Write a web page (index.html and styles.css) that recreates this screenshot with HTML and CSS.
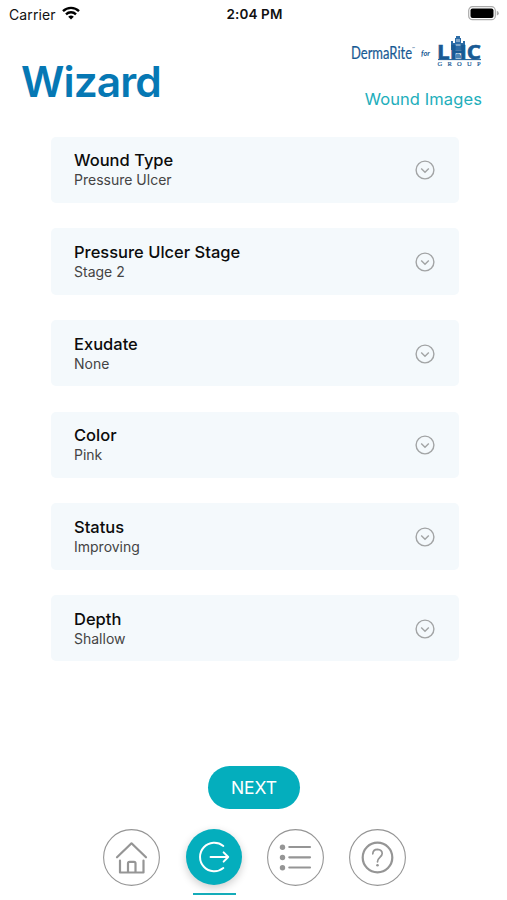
FILE: index.html
```html
<!DOCTYPE html>
<html lang="en">
<head>
<meta charset="utf-8">
<title>Wizard</title>
<link rel="stylesheet" href="styles.css">
</head>
<body>
<svg class="defs" width="0" height="0" aria-hidden="true">
  <symbol id="chevron" viewBox="0 0 20 20"><circle cx="10" cy="10" r="8.9"/><path d="M6.2 8.4 10 12.2 13.8 8.4"/></symbol>
</svg>
<div class="status-bar">
  <div class="carrier"><span>Carrier</span>
    <svg width="18" height="14" viewBox="0 0 18 14" fill="none" stroke="#000" stroke-width="2.4"><path d="M1 5.1a11.5 11.5 0 0 1 16 0"/><path d="M4 8.3a7.2 7.2 0 0 1 10 0"/><path d="M9 13.5 6.2 10.8a4 4 0 0 1 5.6 0z" fill="#000" stroke="none"/></svg>
  </div>
  <div class="time">2:04 PM</div>
  <svg class="battery" width="32" height="15" viewBox="0 0 32 15"><rect x=".7" y=".7" width="26.6" height="13" rx="3.8" fill="#fff" stroke="#aaa" stroke-width="1.2"/><rect x="2.5" y="2.4" width="23" height="9.6" rx="2" fill="#000"/><path d="M28.8 4.8q2 .8 2 2.4t-2 2.4z" fill="#aaa"/></svg>
</div>
<header class="header">
  <h1>Wizard</h1>
  <div class="brand">
    <svg class="logo" width="134" height="34" viewBox="0 0 134 34" fill="#185a94">
      <text class="derma" x="1" y="23" textLength="61" lengthAdjust="spacingAndGlyphs">DermaRite</text>
      <text class="tm" x="62" y="14">™</text>
      <text class="for" x="71" y="20" textLength="9" lengthAdjust="spacingAndGlyphs">for</text>
      <path d="M101 14V5h2v2h2V2h1V0h4v2h1v5h2V5h2v9z" fill="#2c6ca6"/>
      <path d="M105.500 9h5M107 3v3M109 3v3" stroke="#fff" stroke-width=".8"/>
      <text class="lhc" x="87" y="22.500" textLength="44" lengthAdjust="spacingAndGlyphs">LHC</text>
      <path d="M88 23.600h43" stroke="#185a94" stroke-width="1"/>
      <path d="M105 22.500v-3q3-4 6 0v3z" fill="#4b86b7"/>
      <text class="group" x="87.500" y="30" textLength="43">GROUP</text>
    </svg>
    <a class="images-link">Wound Images</a>
  </div>
</header>
<main class="cards">
  <section class="card"><div><h2>Wound Type</h2><p>Pressure Ulcer</p></div><svg class="chevron"><use href="#chevron"/></svg></section>
  <section class="card"><div><h2>Pressure Ulcer Stage</h2><p>Stage 2</p></div><svg class="chevron"><use href="#chevron"/></svg></section>
  <section class="card"><div><h2>Exudate</h2><p>None</p></div><svg class="chevron"><use href="#chevron"/></svg></section>
  <section class="card"><div><h2>Color</h2><p>Pink</p></div><svg class="chevron"><use href="#chevron"/></svg></section>
  <section class="card"><div><h2>Status</h2><p>Improving</p></div><svg class="chevron"><use href="#chevron"/></svg></section>
  <section class="card"><div><h2>Depth</h2><p>Shallow</p></div><svg class="chevron"><use href="#chevron"/></svg></section>
</main>
<button class="next">NEXT</button>
<nav class="tabs">
  <a class="tab"><svg viewBox="0 0 57 57"><circle cx="28.500" cy="28.500" r="27.900" stroke-width="1.100"/><path d="M14 28.300 28.500 14.300 43 28.300M17 31.500V43.500H40.500V31.500M25 43.500V34.300Q25 32.800 26.500 32.800H31Q32.500 32.800 32.500 34.300V43.500"/></svg></a>
  <a class="tab active"><svg viewBox="0 0 57 57"><path d="M38 17.300A14.500 14.500 0 1 0 38 39.700M25 28.500H43M38.300 23.800 43 28.500 38.300 33.200"/></svg></a>
  <a class="tab"><svg viewBox="0 0 57 57"><circle cx="28.500" cy="28.500" r="27.900" stroke-width="1.100"/><path d="M22.300 18H43M22.300 28.300H43M22.300 38.500H43"/><g fill="#959595" stroke="none"><circle cx="15.500" cy="18.300" r="2.700"/><circle cx="15.500" cy="28.500" r="2.700"/><circle cx="15.500" cy="38.700" r="2.700"/></g></svg></a>
  <a class="tab"><svg viewBox="0 0 57 57"><circle cx="28.500" cy="28.500" r="27.900" stroke-width="1.100"/><circle cx="28.500" cy="28.500" r="14.800"/><path d="M23.800 24.800Q24 20.300 28.500 20.300 33.200 20.500 33.200 24.500C33.200 28 28.500 28.300 28.500 32.800" stroke-width="1.700"/><circle cx="28.500" cy="36.300" r="1.300" fill="#959595" stroke="none"/></svg></a>
</nav>
</body>
</html>
```
FILE: styles.css
```css
* { box-sizing: border-box; }
body { margin: 0; width: 507px; height: 900px; overflow: hidden; background: #fff; font-family: Inter, "Liberation Sans", sans-serif; color: #111; display: flex; flex-direction: column; }
h1, h2, p { margin: 0; }
.defs { position: absolute; }
.status-bar { height: 28px; padding: 0 7px 0 9px; display: grid; grid-template-columns: 1fr auto 1fr; align-items: center; font-size: 14px; }
.carrier { display: flex; align-items: center; gap: 6px; letter-spacing: .1px; }
.carrier svg { margin-top: -2px; }
.time { font-weight: 600; font-size: 13.500px; letter-spacing: .1px; }
.battery { justify-self: end; margin-top: -1px; }
.header { height: 108.500px; padding: 8px 25px 0 21px; display: flex; justify-content: space-between; align-items: flex-start; }
h1 { margin-top: 20px; font-size: 42.500px; line-height: 51px; font-weight: 600; letter-spacing: -.9px; color: #0678b4; }
.brand { display: flex; flex-direction: column; align-items: flex-end; }
.logo { display: block; margin-right: -2px; }
.derma { font: 17px Lato, sans-serif; stroke: #185a94; stroke-width: .2; }
.tm { font: 4px Lato, sans-serif; }
.for { font: italic bold 8px Lato, sans-serif; }
.lhc { font: bold 19px "Open Sans", sans-serif; stroke: #185a94; stroke-width: .6; }
.group { font: 6.500px "Liberation Serif", serif; stroke: #185a94; stroke-width: .2; }
.images-link { margin-top: 19px; font-size: 16.500px; line-height: 21px; letter-spacing: .1px; color: #22aebb; }
.cards { width: 408.500px; margin-left: 50.500px; display: flex; flex-direction: column; gap: 25.200px; }
.card { height: 66.500px; padding: 1px 24px 0 23.500px; border-radius: 5px; background: #f4f9fc; display: flex; align-items: center; justify-content: space-between; }
h2 { font-size: 16.500px; line-height: 20px; font-weight: 500; color: #0c0c0c; }
p { font-size: 14px; line-height: 20px; color: #444; }
.chevron { width: 20px; height: 20px; fill: none; stroke: #a2a4a5; stroke-width: 1.400; }
.next { margin: 105px 0 0 208px; width: 92px; height: 43px; padding: 0; border: 0; border-radius: 22px; background: #04aebd; color: #fff; font: 17.500px Inter, sans-serif; }
.tabs { margin: 19.500px 0 0 102.500px; display: flex; gap: 25px; }
.tab { position: relative; width: 57px; height: 57px; border-radius: 50%; }
.tab svg { display: block; width: 100%; height: 100%; fill: none; stroke: #959595; stroke-width: 2.200; stroke-linecap: round; stroke-linejoin: round; }
.active { width: 56px; height: 56px; margin-left: 1px; background: #04aebd; box-shadow: 0 3px 8px rgba(0,0,0,.2); }
.active svg { stroke: #fff; stroke-width: 2; }
.active::after { content: ""; position: absolute; left: 7px; top: 64px; width: 43px; height: 2.500px; background: #14acb9; }
```
